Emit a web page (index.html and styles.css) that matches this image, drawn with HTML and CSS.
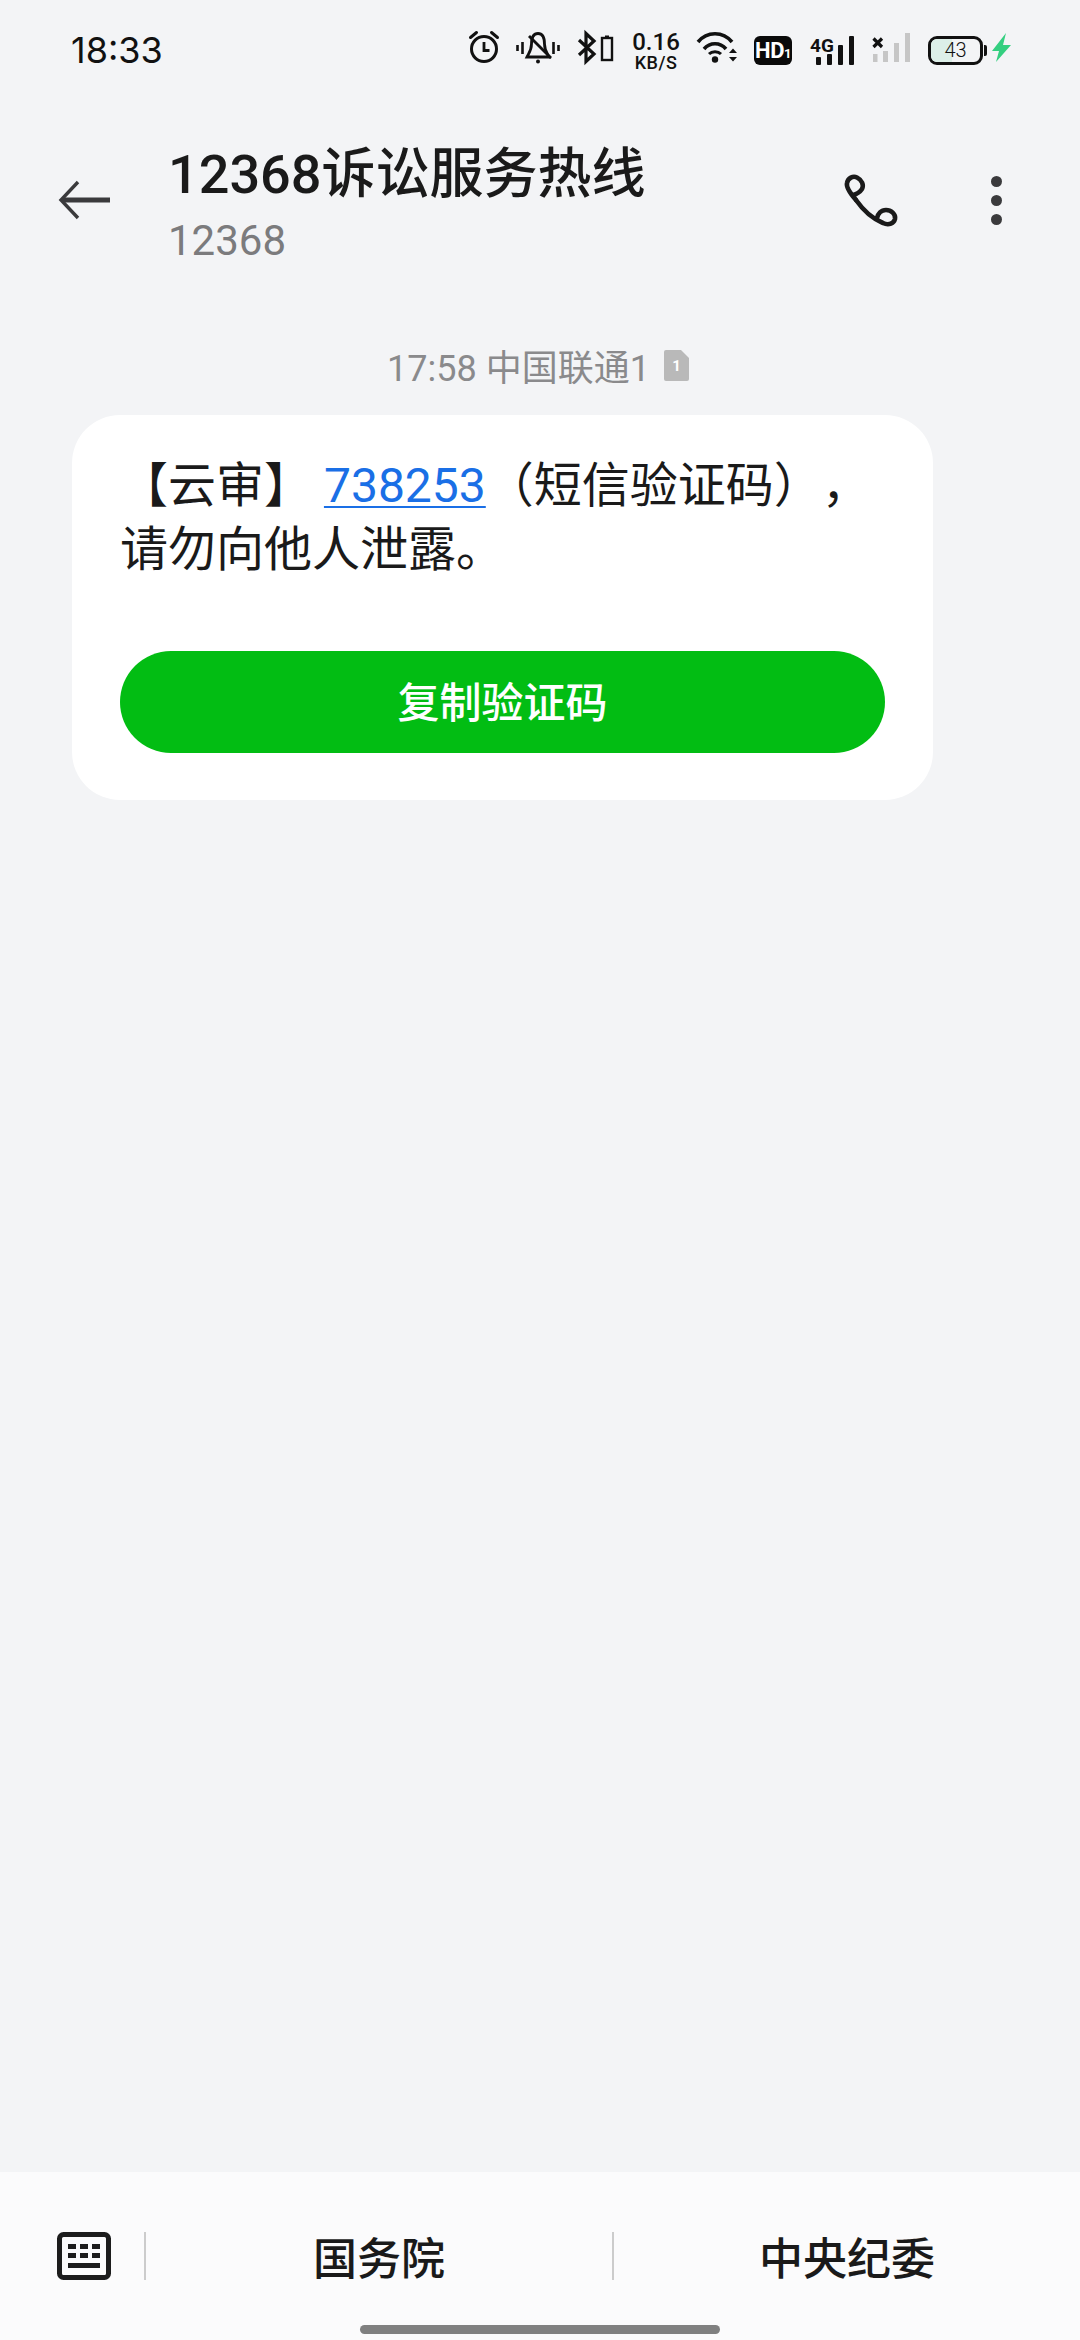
FILE: index.html
```html
<!DOCTYPE html>
<html lang="zh-CN">
<head>
    <meta charset="utf-8">
    <title>12368诉讼服务热线</title>
    <link rel="stylesheet" href="styles.css">
</head>
<body>
    <!-- status bar -->
    <div class="status-bar">
        <span class="status-time">18:33</span>
        <div class="status-icons">
            <svg class="icon-alarm" width="32" height="50" viewBox="0 0 32 50" fill="none" stroke="#111" stroke-width="3">
                <circle cx="16" cy="24" r="12.5"/>
                <path d="M2.5 12.5L8.5 7.5M29.5 12.5L23.5 7.5" stroke-linecap="round"/>
                <path d="M16 17V25.500H21.500" stroke-width="2.800"/>
            </svg>
            <svg class="icon-bell" width="46" height="50" viewBox="0 0 46 50" fill="none" stroke="#111" stroke-width="2.800">
                <path d="M2.500 20V26M7.500 17V29M38.500 17V29M43.500 20V26" stroke-width="2.600"/>
                <path d="M23 8.500C17 8.500 16.500 14 16.500 19C16.500 25 14 28 12 32H34C32 28 29.500 25 29.500 19C29.500 14 29 8.500 23 8.500Z"/>
                <path d="M14 11L36 33"/>
                <circle cx="23" cy="36.500" r="2" fill="#111" stroke="none"/>
            </svg>
            <svg class="icon-bluetooth" width="37" height="50" viewBox="0 0 37 50" fill="none" stroke="#111" stroke-width="3.200">
                <path d="M2 15L17 29L9 36.500V8.500L17 16L2 30"/>
                <rect x="25" y="13" width="10" height="22" stroke-width="2.400"/>
                <path d="M28 11.500H32" stroke-width="2"/>
            </svg>
            <div class="net-speed">
                <span class="speed-value">0.16</span>
                <span class="speed-unit">KB/S</span>
            </div>
            <svg class="icon-wifi" width="42" height="50" viewBox="0 0 42 50" fill="none" stroke="#111" stroke-width="3.600">
                <path d="M2 17C11 6 27 6 36 17"/>
                <path d="M8 24C14 17 24 17 30 24"/>
                <path d="M13 29C16 26 22 26 25 29" stroke-width="3"/>
                <circle cx="19" cy="34.500" r="3.200" fill="#111" stroke="none"/>
                <path d="M33 28L37 23.500L41 28ZM33 32L37 36.500L41 32Z" fill="#111" stroke="none"/>
            </svg>
            <div class="hd-badge">HD<span class="hd-num">1</span></div>
            <div class="signal">
                <span class="signal-type">4G</span>
                <i class="bar bar-1"></i><i class="bar bar-2"></i><i class="bar bar-3"></i><i class="bar bar-4"></i>
            </div>
            <svg class="icon-nosim" width="38" height="50" viewBox="0 0 38 50">
                <path d="M1.500 13.500L10 22M10 13.500L1.500 22" stroke="#111" stroke-width="3.200" fill="none"/>
                <rect x="1" y="29" width="4.500" height="8" fill="#c6c6c6"/>
                <rect x="11" y="26" width="5" height="11" fill="#c6c6c6"/>
                <rect x="22" y="18" width="5" height="19" fill="#c6c6c6"/>
                <rect x="33" y="8" width="5" height="29" fill="#c6c6c6"/>
            </svg>
            <div class="battery">
                <div class="battery-body">
                    <div class="battery-level" style="width: 43%"></div>
                    <span class="battery-num">43</span>
                </div>
                <i class="battery-cap"></i>
                <svg class="icon-bolt" width="19" height="50" viewBox="0 0 19 50">
                    <path d="M14 8L0 26H7L4 37L19 20H11L14 8Z" fill="#34cf80"/>
                </svg>
            </div>
        </div>
    </div>

    <!-- header -->
    <div class="header">
        <svg class="icon-back" width="52" height="40" viewBox="0 0 52 40" fill="none" stroke="#3a3a3c">
            <path d="M20 2L3 20L20 38" stroke-width="3.400"/>
            <path d="M4 20H52" stroke-width="5"/>
        </svg>
        <div class="contact">
            <div class="contact-name">12368诉讼服务热线</div>
            <div class="contact-number">12368</div>
        </div>
        <svg class="icon-phone" width="68" height="70" viewBox="0 0 68 70" fill="none" stroke="#1a1a1a" stroke-width="4.600" stroke-linecap="round">
            <path d="M25 35C18 27 15 22 16 18C17 13 22 10.500 26 12.500C31 15 33 20 31 24C29 27 26 29 22 30"/>
            <path d="M25 35C32 45 42 54 52 58C58 61 63 58 64 54C65 49 60 45 55 45C50 45 47 49 46 53"/>
        </svg>
        <div class="more-dots"><i></i><i></i><i></i></div>
    </div>

    <!-- message list -->
    <div class="messages">
        <div class="message-meta">
            <span>17:58 中国联通1</span>
            <svg class="icon-sim" width="25" height="31" viewBox="0 0 25 31">
                <path d="M2 0H17L25 8V29Q25 31 23 31H2Q0 31 0 29V2Q0 0 2 0Z" fill="#b9b9b9"/>
                <text x="12.500" y="21" class="sim-num">1</text>
            </svg>
        </div>
        <div class="bubble">
            <p class="bubble-text">【云审】 <a class="code-link">738253</a>（短信验证码），请勿向他人泄露。</p>
            <button class="copy-button">复制验证码</button>
        </div>
    </div>

    <!-- quick menu -->
    <div class="bottom-bar">
        <div class="menu-row">
            <svg class="icon-keyboard" width="54" height="48" viewBox="0 0 54 48">
                <rect x="2.500" y="2.500" width="49" height="43" rx="4" fill="none" stroke="#1c1c1c" stroke-width="5"/>
                <g fill="#1c1c1c">
                    <rect x="11" y="12" width="8" height="5"/><rect x="23" y="12" width="8" height="5"/><rect x="35" y="12" width="8" height="5"/>
                    <rect x="11" y="21" width="8" height="5"/><rect x="23" y="21" width="8" height="5"/><rect x="35" y="21" width="8" height="5"/>
                    <rect x="11" y="31" width="32" height="5"/>
                </g>
            </svg>
            <div class="menu-item menu-first">国务院</div>
            <div class="menu-item menu-second">中央纪委</div>
        </div>
        <div class="home-indicator"></div>
    </div>
</body>
</html>
```

FILE: styles.css
```css
* {
    box-sizing: border-box;
}

html, body {
    margin: 0;
    padding: 0;
}

body {
    width: 1080px;
    height: 2340px;
    display: flex;
    flex-direction: column;
    background-color: #f3f4f6;
    color: #1a1a1a;
    font-family: "Roboto", "Noto Sans CJK SC", sans-serif;
    overflow: hidden;
}

/* status bar */
.status-bar {
    height: 50px;
    margin-top: 25px;
    display: flex;
    align-items: center;
    justify-content: space-between;
    padding-left: 71px;
}

.status-time {
    font-family: "Inter", sans-serif;
    font-size: 36px;
    color: #111;
    font-weight: 400;
}

.status-icons {
    display: flex;
    align-items: center;
    margin-left: auto;
    margin-right: 69px;
}

.icon-bell { margin-left: 15px; }
.icon-bluetooth { margin-left: 16px; }
.icon-wifi { margin-left: 18px; }
.icon-nosim { margin-left: 18px; }

.net-speed {
    width: 44px;
    margin-left: 20px;
    display: flex;
    flex-direction: column;
    align-items: center;
    color: #111;
    font-weight: 500;
}

.speed-value {
    font-size: 24px;
    line-height: 22px;
}

.speed-unit {
    font-size: 18px;
    line-height: 15px;
    letter-spacing: 0.5px;
    margin-top: 2px;
}

.hd-badge {
    width: 38px;
    height: 29px;
    margin-left: 16px;
    background-color: #0a0a0a;
    border-radius: 6px;
    color: white;
    font-size: 22px;
    font-weight: 700;
    letter-spacing: -0.5px;
    line-height: 29px;
    text-align: center;
}

.hd-num {
    font-size: 13px;
}

.signal {
    position: relative;
    width: 44px;
    height: 29px;
    margin-left: 18px;
}

.signal-type {
    position: absolute;
    left: 0;
    top: 1px;
    font-size: 19px;
    font-weight: 700;
    line-height: 17px;
    color: #111;
}

.bar {
    position: absolute;
    bottom: 0;
    width: 5px;
    background-color: #111;
    border-radius: 1px;
}

.bar-1 { left: 6px; height: 8px; }
.bar-2 { left: 17px; height: 11px; }
.bar-3 { left: 28px; height: 20px; }
.bar-4 { left: 39px; height: 29px; }

.battery {
    display: flex;
    align-items: center;
    margin-left: 18px;
}

.battery-body {
    position: relative;
    width: 55px;
    height: 29px;
    border: 3px solid #111;
    border-radius: 9px;
    overflow: hidden;
    text-align: center;
}

.battery-level {
    height: 100%;
    background-color: #dcefe8;
}

.battery-num {
    position: absolute;
    left: 0;
    right: 0;
    top: 0;
    font-size: 20px;
    line-height: 23px;
    font-weight: 300;
    color: #111;
}

.battery-cap {
    width: 3px;
    height: 11px;
    margin-left: 1px;
    background-color: #111;
    border-radius: 0 2px 2px 0;
}

.icon-bolt {
    margin-left: 5px;
}

/* header */
.header {
    height: 150px;
    margin-top: 50px;
    display: flex;
    align-items: center;
    padding-left: 58px;
}

.contact {
    margin-left: 58px;
    width: 620px;
    padding-top: 8px;
}

.contact-name {
    font-size: 54px;
    font-weight: 500;
    line-height: 64px;
}

.contact-number {
    margin-top: 10px;
    font-size: 42px;
    line-height: 48px;
    color: #7b7b7d;
}

.icon-phone {
    margin-left: 43px;
}

.more-dots {
    margin-left: 92px;
    display: flex;
    flex-direction: column;
    gap: 8px;
}

.more-dots i {
    display: block;
    width: 11px;
    height: 11px;
    border-radius: 50%;
    background-color: #3a3a3c;
}

/* message list */
.messages {
    flex: 1;
    padding: 0 72px;
}

.message-meta {
    display: flex;
    align-items: center;
    justify-content: center;
    gap: 14px;
    margin: 60px 0 0 -72px;
    height: 60px;
    width: 1076px;
    font-size: 36px;
    color: #8a8a8c;
}

.sim-num {
    font-family: "Roboto", sans-serif;
    font-size: 15px;
    font-weight: 700;
    fill: white;
    text-anchor: middle;
}

.bubble {
    width: 861px;
    height: 385px;
    margin-top: 20px;
    padding: 39px 48px 0 48px;
    background-color: white;
    border-radius: 48px;
}

.bubble-text {
    margin: 0;
    font-size: 48px;
    line-height: 64px;
    color: #1a1a1a;
    text-spacing-trim: space-all;
}

.code-link {
    color: #1a6fe6;
    text-decoration: underline;
    text-decoration-thickness: 2px;
    text-underline-offset: 4px;
}

.copy-button {
    display: block;
    width: 765px;
    height: 102px;
    margin-top: 69px;
    padding: 0 0 5px;
    border: none;
    border-radius: 51px;
    background-color: #02bd13;
    color: white;
    font-family: inherit;
    font-size: 42px;
    font-weight: 500;
}

/* bottom menu */
.bottom-bar {
    height: 168px;
    padding-top: 60px;
    background-color: #fbfbfc;
}

.menu-row {
    height: 48px;
    display: flex;
    align-items: center;
    padding-left: 57px;
}

.menu-item {
    height: 48px;
    display: flex;
    align-items: center;
    justify-content: center;
    font-size: 44px;
    font-weight: 500;
    color: #1a1a1a;
}

.menu-first {
    width: 470px;
    margin-left: 33px;
    border-left: 2px solid #cccccc;
    border-right: 2px solid #cccccc;
}

.menu-second {
    flex: 1;
}

.home-indicator {
    width: 360px;
    height: 9px;
    margin: 45px auto 0;
    background-color: #808080;
    border-radius: 5px;
}
```
